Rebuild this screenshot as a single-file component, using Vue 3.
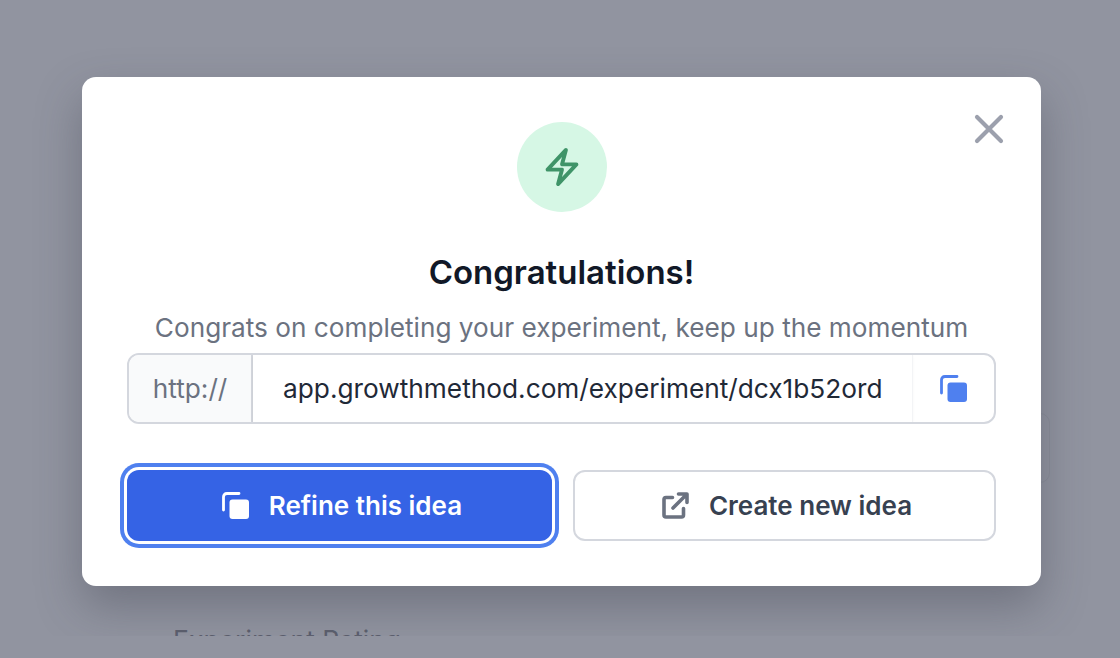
<script setup>
// Congratulations modal
const url = 'app.growthmethod.com/experiment/dcx1b52ord'
</script>

<template>
  <div class="page">
    <div class="behind_label">Experiment Rating</div>
    <div class="behind_box"></div>

    <div class="modal">
      <button class="close" aria-label="Close">
        <svg width="30" height="30" viewBox="0 0 30 30" fill="none" stroke="#9ca0ad" stroke-width="4.2" stroke-linecap="round">
          <path d="M3 3 L27 27 M27 3 L3 27" />
        </svg>
      </button>

      <div class="badge">
        <svg width="42" height="42" viewBox="0 0 24 24" fill="none" stroke="#3f9468" stroke-width="2.2" stroke-linejoin="round" stroke-linecap="round">
          <path d="M3.75 13.5l10.5-11.25L12 10.5h8.25L9.75 21.75 12 13.5H3.75z" />
        </svg>
      </div>

      <h2 class="title">Congratulations!</h2>
      <p class="subtitle">Congrats on completing your experiment, keep up the momentum</p>

      <div class="url_field">
        <div class="prefix">http://</div>
        <div class="url">{{ url }}</div>
        <div class="copy">
          <svg width="27" height="27" viewBox="0 0 27 27">
            <path d="M1.5 18 V5 Q1.5 1.5 5 1.5 H17" fill="none" stroke="#4f80ef" stroke-width="2.8" stroke-linecap="round" />
            <rect x="7.5" y="7.5" width="19.5" height="19.5" rx="3" fill="#4f80ef" />
          </svg>
        </div>
      </div>

      <div class="actions">
        <button class="btn primary">
          <svg width="27" height="27" viewBox="0 0 27 27">
            <path d="M1.5 18 V5 Q1.5 1.5 5 1.5 H17" fill="none" stroke="#fff" stroke-width="2.8" stroke-linecap="round" />
            <rect x="7.5" y="7.5" width="19.5" height="19.5" rx="3" fill="#fff" />
          </svg>
          Refine this idea
        </button>
        <button class="btn secondary">
          <svg width="27" height="27" viewBox="0 0 27 27" fill="none" stroke="#6b7280" stroke-width="3.6" stroke-linecap="round" stroke-linejoin="round">
            <path d="M10.5 5.5 H4 Q2 5.5 2 7.5 V23 Q2 25 4 25 H19.5 Q21.5 25 21.5 23 V16.5" />
            <path d="M16.5 2 H25 V10.5 M24.5 2.5 L11 16" />
          </svg>
          Create new idea
        </button>
      </div>
    </div>

    <div class="shade_strip"></div>
  </div>
</template>

<style>
html, body {
  margin: 0;
  background: #9194a0;
}
</style>

<style scoped>
.page {
  position: relative;
  width: 1120px;
  height: 658px;
  overflow: hidden;
  background: #9194a0;
  box-sizing: border-box;
  padding: 77px 79px 72px 82px;
  font-family: Inter, "Liberation Sans", sans-serif;
}
.behind_label {
  position: absolute;
  left: 173px;
  top: 625px;
  font-size: 26.5px;
  line-height: 30px;
  font-weight: 400;
  color: #5c5f6e;
  white-space: nowrap;
}
.behind_box {
  position: absolute;
  left: 1000px;
  top: 413px;
  width: 48px;
  height: 68px;
  border: 1px solid #8a8d99;
  border-radius: 10px;
}
.shade_strip {
  position: absolute;
  z-index: 2;
  left: 0;
  right: 0;
  top: 636px;
  bottom: 0;
  background: #9194a0;
}
.modal {
  position: relative;
  z-index: 1;
  box-sizing: border-box;
  width: 959px;
  height: 509px;
  padding: 45px 45px 0;
  background: #fff;
  border-radius: 14px;
  box-shadow: 0 20px 45px rgba(60, 62, 75, 0.38);
  display: flex;
  flex-direction: column;
  align-items: center;
}
.close {
  position: absolute;
  top: 37px;
  right: 37px;
  padding: 0;
  border: 0;
  background: none;
  display: flex;
}
.badge {
  width: 90px;
  height: 90px;
  border-radius: 50%;
  background: #d6f7e5;
  display: flex;
  align-items: center;
  justify-content: center;
}
.title {
  margin: 40px 0 0;
  font-size: 33px;
  line-height: 40px;
  font-weight: 600;
  color: #111827;
}
.subtitle {
  margin: 18px 0 0;
  font-size: 26.2px;
  line-height: 35px;
  color: #6b7280;
  white-space: nowrap;
}
.url_field {
  box-sizing: border-box;
  width: 869px;
  height: 71px;
  margin-top: 8px;
  display: flex;
  border: 2px solid #d4d7de;
  border-radius: 12px;
  overflow: hidden;
  font-size: 26.25px;
}
.prefix {
  width: 122px;
  flex: none;
  display: flex;
  align-items: center;
  justify-content: center;
  background: #f9fafb;
  border-right: 2px solid #d4d7de;
  color: #6b7280;
}
.url {
  flex: 1;
  display: flex;
  align-items: center;
  padding-left: 30px;
  color: #1f2937;
  box-shadow: 0 1px 3px rgba(0, 0, 0, 0.08);
}
.copy {
  width: 82px;
  flex: none;
  display: flex;
  align-items: center;
  padding-left: 27px;
  box-sizing: border-box;
  border-left: 1px solid #f3f4f6;
}
.actions {
  width: 869px;
  margin-top: 46px;
  display: grid;
  grid-template-columns: 425px 423px;
  column-gap: 21px;
}
.btn {
  box-sizing: border-box;
  height: 71px;
  display: flex;
  align-items: center;
  justify-content: center;
  gap: 20px;
  border-radius: 12px;
  font-family: inherit;
  font-size: 26px;
  font-weight: 600;
  padding: 0;
}
.primary {
  background: #3563e5;
  color: #fff;
  border: 0;
  padding-left: 5px;
  box-shadow: 0 0 0 3px #fff, 0 0 0 7px #4f80ef;
}
.secondary {
  background: #fff;
  color: #374151;
  border: 2px solid #d4d7de;
  padding-left: 5px;
}
</style>
